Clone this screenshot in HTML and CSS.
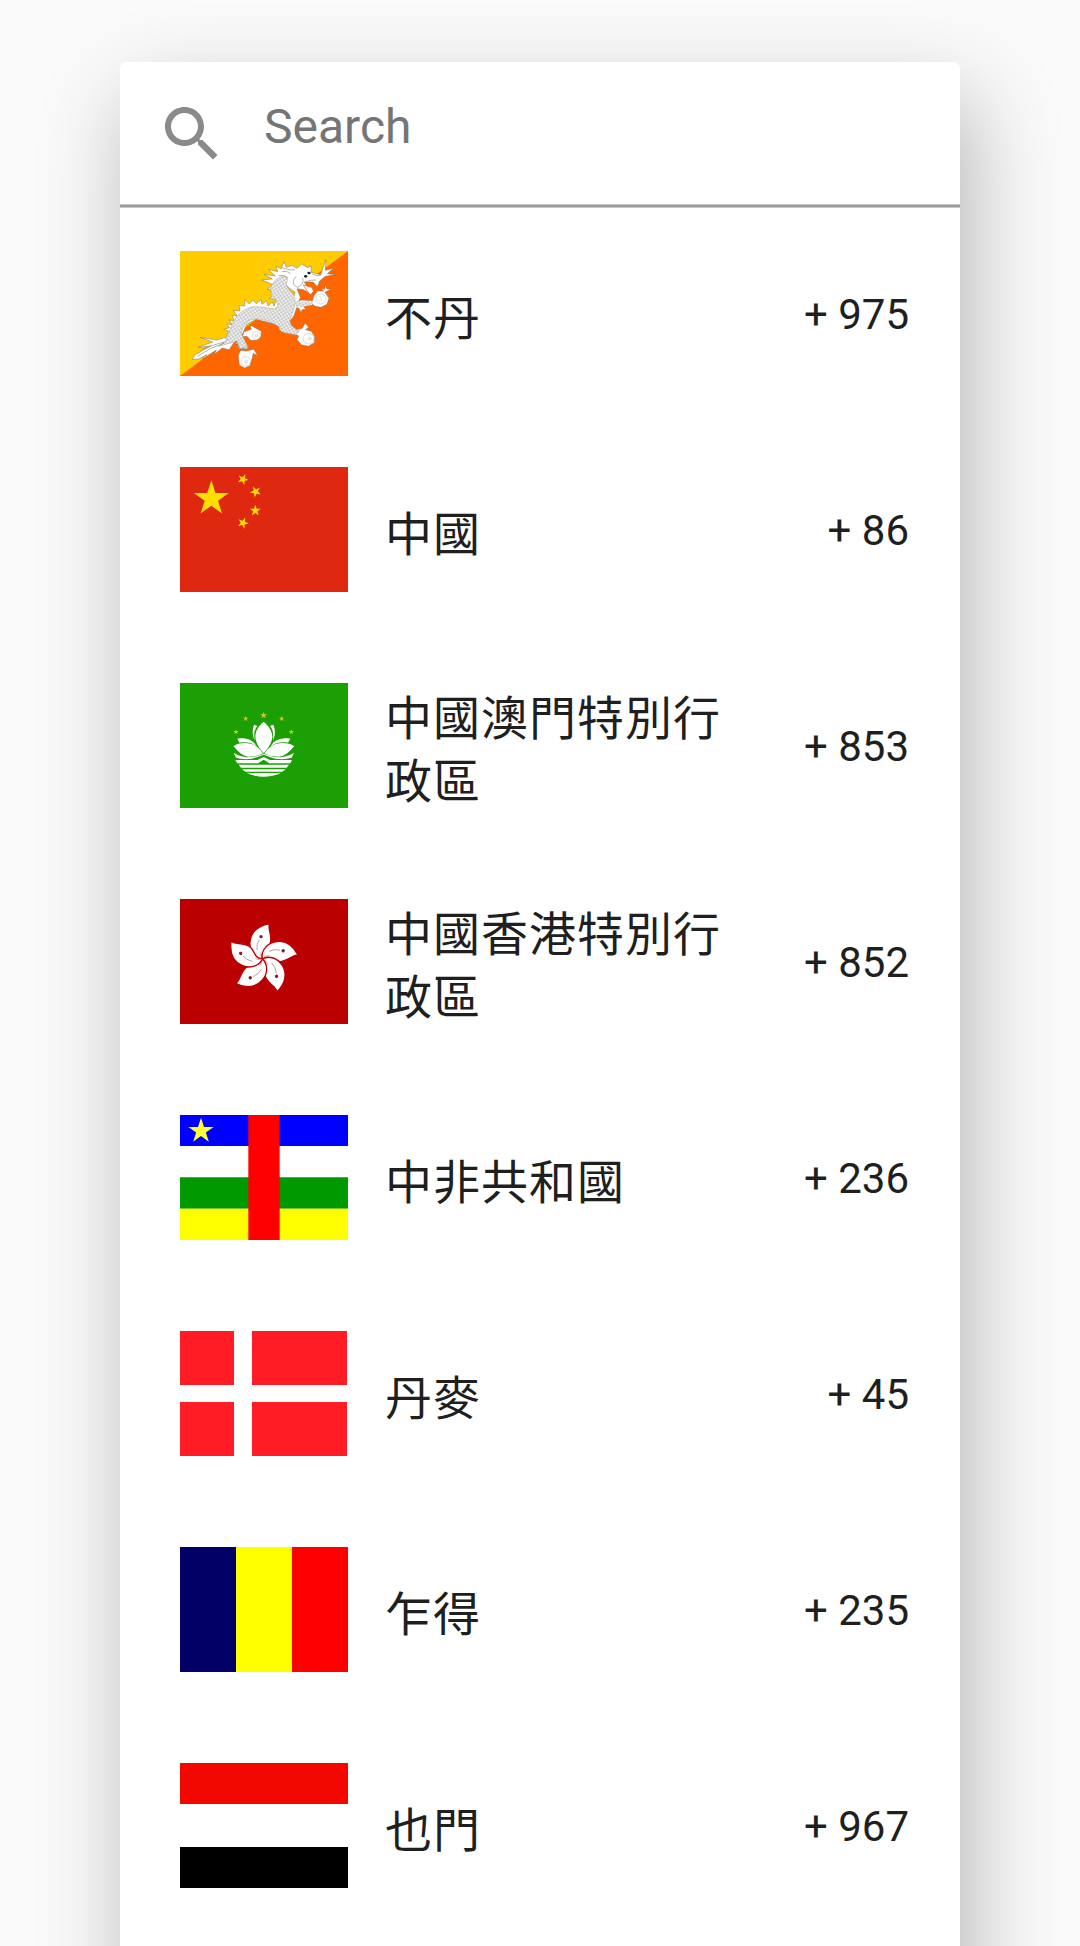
FILE: index.html
```html
<!DOCTYPE html>
<html lang="zh-Hant">
<head>
    <meta charset="UTF-8">
    <meta name="viewport" content="width=device-width, initial-scale=1.0">
    <title>Country Codes</title>
    <link rel="stylesheet" href="styles.css">
</head>
<body>
    <!-- shared shapes -->
    <svg class="defs" width="0" height="0">
        <defs>
            <polygon id="star" points="0,-10 2.25,-3.09 9.51,-3.09 3.63,1.18 5.88,8.09 0,3.82 -5.88,8.09 -3.63,1.18 -9.51,-3.09 -2.25,-3.09"/>
            <pattern id="scales" width="12" height="12" patternUnits="userSpaceOnUse" patternTransform="rotate(12)">
                <rect width="12" height="12" fill="#fafafa"/>
                <path d="M0 1Q6 9 12 1M-6 7Q0 15 6 7Q12 15 18 7" fill="none" stroke="#8c8c8c" stroke-width="1.600"/>
            </pattern>
            <g id="petal">
                <path d="M277 207C258 205 237 187 240 155C243 124 268 107 299 101C292 115 305 130 302 154C299 178 270 180 277 207Z" fill="#fff" stroke="#ba0000" stroke-width="4"/>
                <path d="M277 207C269 199 269 192 274 182C274 192 275 199 277 207Z" fill="#f7a5a5"/>
                <path d="M261 181Q259 163 268 148" fill="none" stroke="#a77" stroke-width="2"/>
                <circle cx="273" cy="140" r="5" fill="#7d1c26"/>
            </g>
        </defs>
    </svg>

    <div class="dialog">
        <div class="search-bar">
            <svg class="search-icon" viewBox="0 0 24 24">
                <path d="M15.500 14h-.79l-.28-.27C15.410 12.590 16 11.110 16 9.500 16 5.910 13.090 3 9.500 3S3 5.910 3 9.500 5.910 16 9.500 16c1.610 0 3.090-.59 4.230-1.570l.27.28v.79l5 4.990L20.490 19l-4.990-5zm-6 0C7.010 14 5 11.990 5 9.500S7.010 5 9.500 5 14 7.010 14 9.500 11.990 14 9.500 14z"/>
            </svg>
            <input class="search-input" type="text" placeholder="Search">
        </div>

        <div class="country-list">
            <div class="country">
                <svg class="flag" viewBox="30 34 504 375">
                    <path d="M30 34H534V409H30Z" fill="#ff6600"/>
                    <path d="M30 34H534L30 409Z" fill="#ffcc00"/>
                    <g stroke="#77756a" stroke-width="1.500" stroke-linejoin="round" fill="#fff">
                        <!-- tail -->
                        <path d="M170 292L140 301L90 293L128 307L84 323L122 319L76 345L66 359L85 358L111 345L96 359L139 331L133 344L157 325L177 330L194 306Z"/>
                        <!-- legs -->
                        <path d="M221 277L244 269L240 256L255 264L274 275L273 290L260 302L242 302L231 290L218 291Z"/>
                        <path d="M205 299L197 314L205 312L202 326L214 314L210 332L229 334L252 329L263 349L250 341L246 357L240 378L224 385L208 376L205 347L212 332Z"/>
                        <path d="M375 272L397 266L405 251L416 262L407 270L424 275L434 291L433 309L415 320L394 315L381 300L386 289L374 283Z"/>
                        <path d="M392 181L428 183L431 169L443 154L461 154L453 145L464 149L466 135L470 147L482 149L465 158L477 176L471 194L453 203L436 200L426 193L399 198L407 209L396 210L394 219L386 205L370 203Z"/>
                        <!-- spine and mane -->
                        <path d="M167 298L176 274L161 269L179 264L170 253L187 255L177 240L193 245L187 227L202 229L190 212L210 214L207 197L224 199L225 180L238 193L250 181L259 192L273 180L276 194L290 183L294 199L307 187L312 200L319 178L298 177L315 163L301 155L314 146L292 151L307 134L275 121L307 118L283 104L316 109L295 89L323 96L318 79L333 88L342 66L349 83L366 77L381 86L395 73L413 84L424 79L423 98L452 105L468 59L466 92L490 86L472 102L496 105L466 110L449 124L442 141L429 127L403 127L412 143L429 151L423 167L413 158L401 150L381 147L391 173L371 230L344 264L313 253L258 239L230 254L216 286L234 328L208 326L201 304Z"/>
                    </g>
                    <!-- scaled body -->
                    <path d="M172 300C180 259 198 219 235 205C265 194 295 209 313 207C332 203 320 183 308 171C296 154 304 128 324 116C345 102 358 113 349 130C348 145 366 154 374 174C380 194 366 222 360 239C358 256 370 265 388 273L378 286C356 280 326 282 327 261C299 243 266 234 244 240C225 248 215 266 214 282L234 322L209 327C207 307 202 300 195 306L145 320Z" fill="url(#scales)" stroke="#a09e95" stroke-width="1.500"/>
                    <path d="M366 178C384 190 408 185 430 183L426 196C407 198 397 204 378 203Z" fill="url(#scales)"/>
                    <!-- head details -->
                    <path d="M379 111C366 119 367 137 382 143C394 139 404 126 397 115M337 96Q354 93 362 103M336 84Q361 93 375 90M326 107Q342 105 354 115M404 127Q422 120 438 121M427 103Q442 111 452 107M82 350Q117 325 163 310M96 329Q130 315 163 307" fill="none" stroke="#8b8b86" stroke-width="2"/>
                    <path d="M350 139L376 158L373 168Z" fill="#e6bd37" stroke="#80724b"/>
                    <path d="M400 136L425 143L431 155L421 165L412 154Z" fill="#fff" stroke="#d45c2b" stroke-width="2"/>
                    <ellipse cx="407" cy="110" rx="5" ry="4" fill="#222"/>
                    <ellipse cx="417" cy="100" rx="5" ry="4" fill="#222"/>
                    <!-- jewels -->
                    <g fill="#fff" stroke="#b9b9b9" stroke-width="1.500">
                        <circle cx="259" cy="287" r="12"/>
                        <circle cx="227" cy="365" r="14"/>
                        <circle cx="415" cy="297" r="16"/>
                        <circle cx="453" cy="178" r="15"/>
                        <path d="M256 285h7v6h-7zM225 363h7v6h-7zM416 294h7v6h-7zM448 171q10 5 5 13" fill="none"/>
                    </g>
                </svg>
                <div class="name">不丹</div>
                <div class="code">+ 975</div>
            </div>

            <div class="country">
                <svg class="flag" viewBox="30 36 504 375">
                    <path d="M30 36H534V411H30Z" fill="#de2910"/>
                    <g fill="#ffde00">
                        <use href="#star" transform="translate(124 131) scale(5.500)"/>
                        <use href="#star" transform="translate(219 73) rotate(24) scale(1.750)"/>
                        <use href="#star" transform="translate(257 110) rotate(46) scale(1.750)"/>
                        <use href="#star" transform="translate(256 167) scale(1.750)"/>
                        <use href="#star" transform="translate(219 204) rotate(22) scale(1.750)"/>
                    </g>
                </svg>
                <div class="name">中國</div>
                <div class="code">+ 86</div>
            </div>

            <div class="country">
                <svg class="flag" viewBox="30 24 504 375">
                    <path d="M30 24H534V399H30Z" fill="#1c9f04"/>
                    <g fill="#cccb27">
                        <use href="#star" transform="translate(281 121) scale(1.100)"/>
                        <use href="#star" transform="translate(227 131) scale(.85)"/>
                        <use href="#star" transform="translate(335 131) scale(.85)"/>
                        <use href="#star" transform="translate(198 171) scale(.85)"/>
                        <use href="#star" transform="translate(364 171) scale(.85)"/>
                    </g>
                    <g fill="#fff">
                        <path d="M281 140C267 152 256 166 256 185C257 205 270 222 281 234C292 222 306 205 307 185C306 166 295 152 281 140Z"/>
                        <path d="M252 149C246 166 247 181 254 196C251 178 253 163 262 153ZM310 149C317 166 316 181 309 196C311 178 309 163 300 153Z"/>
                        <path d="M202 191C230 187 250 196 260 214C247 203 227 200 208 203ZM361 191C332 187 312 196 302 214C315 203 335 200 354 203Z"/>
                        <path d="M190 214C207 201 239 202 257 212C268 220 274 228 279 235C265 243 251 245 235 245C217 244 205 229 190 214ZM373 214C355 201 323 202 306 212C294 220 288 228 283 235C298 243 311 245 327 245C346 244 358 229 373 214Z"/>
                        <path d="M191 233Q205 242 229 247Q256 247 281 236Q307 247 333 247Q358 242 372 233L365 248Q344 255 316 251L299 246L281 239L263 246L246 251Q218 255 198 248Z"/>
                        <path d="M196 255H262L281 246L300 255H366L361 265H298L281 254L264 265H202ZM206 269H357L350 278H213ZM216 283H347L337 290H226ZM230 294H333Q281 317 230 294Z"/>
                    </g>
                </svg>
                <div class="name">中國澳門特別行政區</div>
                <div class="code">+ 853</div>
            </div>

            <div class="country">
                <svg class="flag" viewBox="30 27 504 375">
                    <path d="M30 27H534V402H30Z" fill="#ba0000"/>
                    <use href="#petal"/>
                    <use href="#petal" transform="rotate(72 277 207)"/>
                    <use href="#petal" transform="rotate(144 277 207)"/>
                    <use href="#petal" transform="rotate(216 277 207)"/>
                    <use href="#petal" transform="rotate(288 277 207)"/>
                </svg>
                <div class="name">中國香港特別行政區</div>
                <div class="code">+ 852</div>
            </div>

            <div class="country">
                <svg class="flag" viewBox="30 30 504 375">
                    <path d="M30 30H534V123H30Z" fill="#0000ff"/>
                    <path d="M30 123H534V217H30Z" fill="#fff"/>
                    <path d="M30 217H534V311H30Z" fill="#009900"/>
                    <path d="M30 311H534V405H30Z" fill="#ffff00"/>
                    <path d="M235 30H329V405H235Z" fill="#ff0000"/>
                    <use href="#star" transform="translate(93 78) scale(4)" fill="#ffff35"/>
                </svg>
                <div class="name">中非共和國</div>
                <div class="code">+ 236</div>
            </div>

            <div class="country">
                <svg class="flag" viewBox="0 0 168 125">
                    <path d="M0 0H54V54H0ZM72 0H167V54H72ZM0 71H54V125H0ZM72 71H167V125H72Z" fill="#ff1c24"/>
                </svg>
                <div class="name">丹麥</div>
                <div class="code">+ 45</div>
            </div>

            <div class="country">
                <svg class="flag" viewBox="0 0 168 125">
                    <path d="M0 0H56V125H0Z" fill="#000066"/>
                    <path d="M56 0H112V125H56Z" fill="#ffff00"/>
                    <path d="M112 0H168V125H112Z" fill="#ff0000"/>
                </svg>
                <div class="name">乍得</div>
                <div class="code">+ 235</div>
            </div>

            <div class="country">
                <svg class="flag" viewBox="0 0 168 125">
                    <path d="M0 0H168V41H0Z" fill="#f30800"/>
                    <path d="M0 84H168V125H0Z" fill="#000"/>
                </svg>
                <div class="name">也門</div>
                <div class="code">+ 967</div>
            </div>
        </div>
    </div>
</body>
</html>
```

FILE: styles.css
```css
* {
    box-sizing: border-box;
}

body {
    margin: 0;
    height: 1946px;
    padding-top: 62px;
    background: #fafafa;
    color: #1f1f1f;
    font-family: Roboto, "Noto Sans CJK TC", sans-serif;
    overflow: hidden;
}

.defs {
    display: block;
}

.dialog {
    width: 840px;
    height: 2100px;
    margin: 0 auto;
    background: #fff;
    border-radius: 6px 6px 0 0;
    box-shadow: 10px 36px 90px rgba(0, 0, 0, 0.28);
}

.search-bar {
    display: flex;
    height: 145px;
    padding: 36px 36px 0;
    border-bottom: 2px solid #9b9b9b;
    box-shadow: 0 1px #c8c8c8, inset 0 -1px #c8c8c8;
}

.search-icon {
    width: 72px;
    height: 72px;
    fill: #8a8a8a;
}

.search-input {
    flex: 1;
    height: 56px;
    margin-top: 1px;
    margin-left: 36px;
    padding: 0;
    border: none;
    outline: none;
    background: none;
    font-family: inherit;
    font-size: 48px;
    line-height: 56px;
}

.search-input::placeholder {
    color: #757575;
    opacity: 1;
}

.country-list {
    padding: 0 51px 0 60px;
}

.country {
    display: flex;
    align-items: center;
    height: 216px;
}

.flag {
    flex: none;
    width: 168px;
    height: 125px;
    margin-bottom: 3px;
}

.name {
    width: 360px;
    margin-left: 37px;
    padding-top: 6px;
    font-size: 47px;
    line-height: 63px;
    letter-spacing: 1px;
}

.code {
    margin-left: auto;
    font-size: 42px;
    line-height: 50px;
}
```
